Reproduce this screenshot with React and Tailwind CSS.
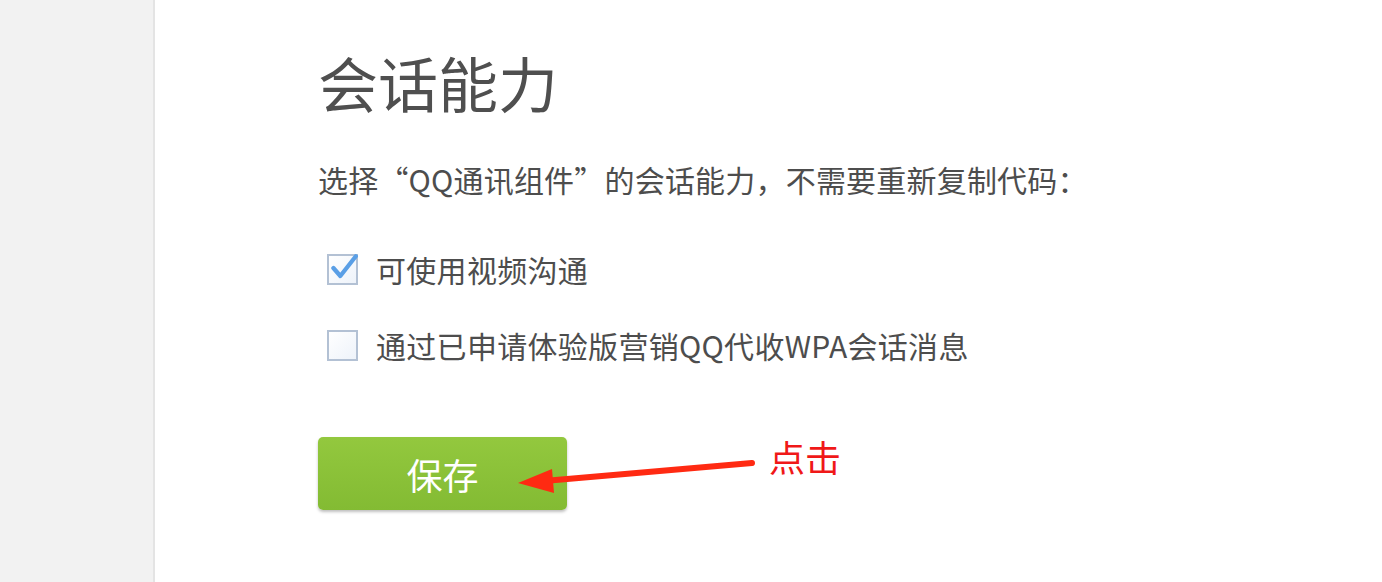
const font = { fontFamily: '"Noto Sans CJK SC", "Noto Sans", sans-serif' };

function Box({ checked, label }) {
  return (
    <label className="flex items-center gap-[18px] h-[32px]">
      <span className="relative w-[31px] h-[31px] ml-[9px] border-2 border-[#b3c1d4] bg-gradient-to-br from-white to-[#eef3fa] shrink-0">
        {checked && (
          <svg
            viewBox="0 0 30 30"
            className="absolute left-[-2px] top-[-4px] w-[32px] h-[32px]"
          >
            <path
              d="M6 15 L12.5 22.5 L27 4"
              fill="none"
              stroke="#5a9fe6"
              strokeWidth="4"
              strokeLinecap="round"
              strokeLinejoin="round"
            />
          </svg>
        )}
      </span>
      <span className="text-[30px] leading-none text-[#4d4d4d] tracking-[0.3px]">{label}</span>
    </label>
  );
}

export default function App() {
  return (
    <div className="flex w-[1382px] h-[582px] bg-white overflow-hidden" style={font}>
      <div className="w-[155px] h-full bg-[#f2f2f2] border-r-2 border-[#e4e4e4] shrink-0" />
      <div className="flex-1 pl-[163px] pt-[52px]">
        <h1 className="text-[60px] leading-none text-[#4f4f4f] font-normal">会话能力</h1>
        <p className="mt-[52px] text-[30px] leading-none text-[#4d4d4d] tracking-[0.2px]">
          选择“QQ通讯组件”的会话能力，不需要重新复制代码：
        </p>
        <div className="mt-[59px] flex flex-col gap-[44px]">
          <Box checked label="可使用视频沟通" />
          <Box label="通过已申请体验版营销QQ代收WPA会话消息" />
        </div>
        <div className="relative mt-[76px] w-[560px]">
          <button className="w-[249px] h-[73px] rounded-[5px] bg-gradient-to-b from-[#93c83e] to-[#83bb33] shadow-[0_2px_3px_rgba(0,0,0,0.25)] text-white text-[36px] leading-none">
            保存
          </button>
          <svg
            className="absolute left-[196px] top-[18px] w-[250px] h-[40px]"
            viewBox="0 0 250 40"
          >
            <path d="M238 8 L30 26" stroke="#ff2a12" strokeWidth="6" strokeLinecap="round" />
            <path d="M4 28 L38 14 L40 38 Z" fill="#ff2a12" />
          </svg>
          <span className="absolute left-[451px] top-[1px] text-[36px] leading-none text-[#f01818]">
            点击
          </span>
        </div>
      </div>
    </div>
  );
}
